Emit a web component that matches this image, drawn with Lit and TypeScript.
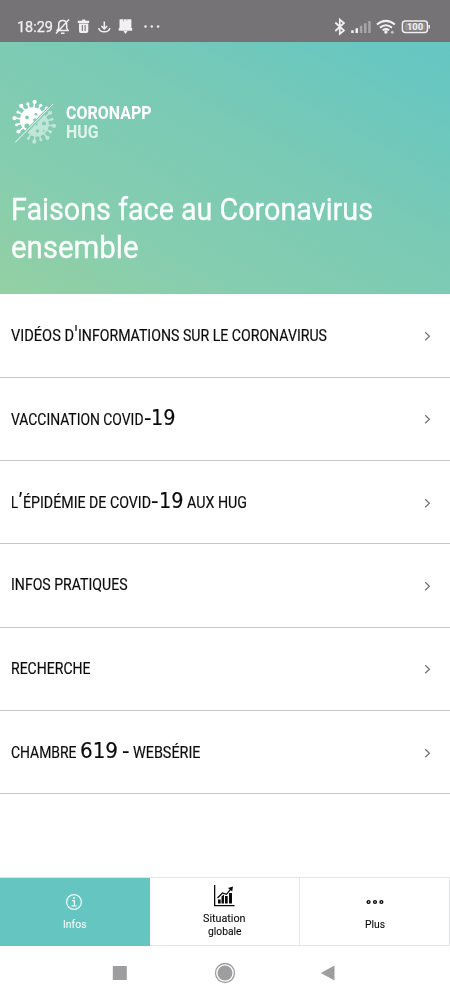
import { LitElement, html, svg, css } from "lit";
import { customElement, property } from "lit/decorators.js";
import { styleMap } from "lit/directives/style-map.js";

/** Text squeezed or stretched horizontally to a given width. */
@customElement("fit-text")
class FitText extends LitElement {
  @property() text = "";
  @property({ type: Number }) width = 0;

  static styles = css`
    :host { display: inline-block; white-space: pre; }
    .inner { display: inline-block; transform-origin: 0 50%; white-space: pre; }
  `;

  updated() {
    const el = this.renderRoot.querySelector(".inner") as HTMLElement;
    this.style.width = this.width + "px";
    el.style.transform = "none";
    const w = el.getBoundingClientRect().width;
    el.style.transform = `scaleX(${this.width / w})`;
    el.style.marginRight = `${this.width - w}px`;
  }

  render() {
    return html`<span class="inner">${this.text}</span>`;
  }
}

type Part = { t: string; w: number; gap?: number; big?: boolean };

const ROWS: Part[][] = [
  [{ t: "VIDÉOS D", w: 63 }, { t: "'", w: 4, big: true }, { t: "INFORMATIONS SUR LE CORONAVIRUS", w: 249 }],
  [{ t: "VACCINATION COVID", w: 132.5 }, { t: "-", w: 7.5, big: true }, { t: "19", w: 24.5, big: true }],
  [{ t: "L", w: 7 }, { t: "’", w: 5, big: true }, { t: "ÉPIDÉMIE DE COVID", w: 128 }, { t: "-", w: 7.5, big: true },
    { t: "19", w: 24.5, big: true }, { t: "AUX HUG", w: 60, gap: 4 }],
  [{ t: "INFOS PRATIQUES", w: 116.5 }],
  [{ t: "RECHERCHE", w: 79.5 }],
  [{ t: "CHAMBRE", w: 65.5 }, { t: "619", w: 38, big: true, gap: 3.5 }, { t: "-", w: 7.5, big: true, gap: 3.5 }, { t: "WEBSÉRIE", w: 67.5, gap: 4 }],
];

const spikes = (cx: number, cy: number, r: number) =>
  Array.from({ length: 16 }, (_, i) => {
    const a = ((i * 22.5 + 6) * Math.PI) / 180;
    const out = r + (i % 2 ? 4.3 : 5.8);
    const x = cx + Math.cos(a) * out;
    const y = cy + Math.sin(a) * out;
    return svg`<line x1=${cx + Math.cos(a) * r} y1=${cy + Math.sin(a) * r} x2=${x} y2=${y} stroke="currentColor" stroke-width="1.5"/>
      <circle cx=${x} cy=${y} r=${i % 2 ? 1.6 : 2.1} fill="currentColor"/>`;
  });

@customElement("app-root")
class AppRoot extends LitElement {
  static styles = css`
    :host { display: block; width: 450px; height: 1000px; overflow: hidden; background: #fff;
      font-family: Roboto, "Liberation Sans", sans-serif; color: #0b0b0c; }
    .page { display: flex; flex-direction: column; height: 1000px; }
    svg { display: block; flex: none; }
    .status { height: 42.3px; flex: none; box-sizing: border-box; background: #767377; color: #f2f0f3; display: flex;
      justify-content: space-between; padding: 17px 19px 0 16.5px; }
    .status-left { display: flex; height: 20px; align-items: center; }
    .status-icons { margin-left: -.4px; }
    .clock { font-size: 15px; line-height: 20px; -webkit-text-stroke: .25px; }
    .hero { height: 252.2px; flex: none; box-sizing: border-box; padding: 55.5px 11px 0;
      background: linear-gradient(29deg, #94d0a3 0%, #85cdb0 28%, #7acab5 58%, #69c7c0 88%, #66c6c2 100%); color: #fff; }
    .brand { display: flex; gap: 10px; height: 48px; }
    .brand-name { display: flex; flex-direction: column; padding-top: 5px; font-size: 18px; line-height: 19px; font-weight: 700; }
    .brand-sub { opacity: .75; }
    .title { margin: 45px 0 0; font-size: 31.5px; line-height: 38.5px; font-weight: 400; display: flex; flex-direction: column;
      color: #fbfffd; -webkit-text-stroke: .3px; }
    .list { flex: none; height: 500px; display: grid; grid-template-rows: repeat(6, 1fr); }
    .row { box-sizing: border-box; border-bottom: 1px solid #c6c7c8; display: flex; align-items: center; justify-content: space-between;
      padding: 0 18.5px .6px 11px; }
    .label { display: flex; align-items: baseline; font-size: 16px; line-height: 24px; -webkit-text-stroke: .18px; }
    .big { font-family: "DejaVu Sans Condensed", "DejaVu Sans", sans-serif; font-size: 21.5px; }
    .chevron { margin-top: 1px; }
    .spacer { flex: 1; }
    .tabs { height: 69px; flex: none; display: grid; grid-template-columns: 149.5px 150.5px 150px; box-sizing: border-box; }
    .tab { box-sizing: border-box; border: 1px solid #e3e4e5; border-left: 0; display: flex; flex-direction: column; align-items: center;
      font-size: 11px; line-height: 13.5px; -webkit-text-stroke: .1px; }
    .tab.active { background: #65c5c1; color: #effffd; border: 0; border-top: 1px solid #d8e8e8; padding-right: 1px; }
    .tab-icon { height: 32.5px; display: flex; align-items: center; padding-top: 7.5px; }
    .chart-icon { height: 29px; display: flex; align-items: flex-end; padding-bottom: 4.5px; }
    .tab-text { display: flex; flex-direction: column; align-items: center; }
    .system { height: 54px; flex: none; display: flex; box-sizing: border-box; padding: 15px 115px 0 112px;
      justify-content: space-between; }
    .home { margin-left: 2px; }
  `;

  renderStatus() {
    return html`<div class="status">
      <div class="status-left">
        <fit-text class="clock" text="18:29" width="36"></fit-text>
        <svg class="status-icons" width="112" height="20" viewBox="52 17 112 20" fill="none" stroke="currentColor" stroke-width="1.5">
          <path d="M58.500 30.500h9.500l-1.300-2.400v-3.500c0-2.800-1.500-4.200-4-4.200s-4 1.400-4 4.200v3.500l-1.500 2.400zM61 33.200h3.500M56 33.500l13-14"/>
          <g fill="currentColor" stroke="none"><path d="M77.800 20.800h4l.7-1.200h2.500l.7 1.200h3.400v2.200H77.800zM79 23.600h9.300v7.700q0 1.800-1.800 1.800h-5.700q-1.800 0-1.800-1.800z"/></g>
          <path stroke="#767377" stroke-width="1.100" d="M82.300 25v6M85.100 25v6"/>
          <path d="M104.300 21.500v7M101.400 26l2.900 2.900 2.900-2.900M98.800 28c.5 5 10.500 5 11 0"/>
          <path fill="currentColor" stroke="none" d="M119.500 20q0-.7.700-.7h10.500q.7 0 .7.700v8h.8v2.800h-13.500V28h.8zM123.400 31h4.200l-2.100 3z"/>
          <path stroke="#9f9ca0" stroke-width=".8" d="M123.500 19v2.500M126.800 19v1.800"/>
          <g fill="currentColor" stroke="none"><circle cx="145.500" cy="26.500" r="1.200"/><circle cx="151.800" cy="26.500" r="1.200"/><circle cx="158.100" cy="26.500" r="1.200"/></g>
        </svg>
      </div>
      <svg width="98" height="20" viewBox="333 17 98 20" fill="none" stroke="currentColor">
        <path stroke-width="1.700" d="M335.300 22.500l8.700 8-4.200 3.500V19.500l4.200 3.500-8.700 8"/>
        <g fill="currentColor" stroke="none">
          <rect x="351.200" y="30.300" width="2.500" height="2.700"/><rect x="355.500" y="28.200" width="2.500" height="4.800"/>
          <g opacity=".4"><rect x="359.800" y="25.800" width="2.500" height="7.200"/><rect x="364" y="23.300" width="2.500" height="9.700"/><rect x="368.200" y="21" width="2.500" height="12"/></g>
        </g>
        <path stroke-width="2" d="M376.900 24.600q9-7.400 18 0M379.900 27.600q6-4.800 12 0M382.700 30.300q3.200-2.400 6.400 0"/>
        <circle cx="385.900" cy="32" r="1.700" fill="currentColor" stroke="none"/>
        <circle cx="392.300" cy="32.300" r="1.500" fill="currentColor" stroke="none" opacity=".6"/>
        <rect x="402.400" y="21" width="25" height="11.400" rx="3" stroke-width="1.500"/>
        <rect x="404.500" y="23" width="20.800" height="7.400" rx="1" fill="#aaa7ab" stroke="none" opacity=".55"/>
        <path d="M429.200 25v3.600" stroke-width="1.400"/>
        <text x="407" y="30.200" font-size="9.500" font-weight="700" fill="currentColor" stroke="none" textLength="16" lengthAdjust="spacingAndGlyphs">100</text>
      </svg>
    </div>`;
  }

  renderVirus() {
    return html`<svg width="45" height="48" viewBox="11 98 45 48">
      <defs>
        <clipPath id="upper"><path d="M8 95H60L14 141.500L8 148z"/></clipPath>
        <clipPath id="lower"><path d="M58 101V148H12L17 143.500z"/></clipPath>
        <mask id="holes"><rect x="0" y="90" width="70" height="60" fill="#fff"/>
          <circle cx="27" cy="117.300" r="1.900"/><circle cx="36" cy="114.300" r="1.400"/><circle cx="27" cy="126" r="2.600"/><circle cx="34.800" cy="119.800" r="1.600"/>
          <circle cx="44" cy="123.500" r="2"/><circle cx="37.500" cy="131" r="1.700"/><circle cx="36.500" cy="124.500" r="1"/><circle cx="43.500" cy="130.800" r=".9"/></mask>
      </defs>
      <g clip-path="url(#upper)"><circle cx="32.700" cy="120" r="12.800" fill="currentColor" mask="url(#holes)"/>${spikes(32.7, 120, 12.5)}</g>
      <g clip-path="url(#lower)" opacity=".5"><circle cx="36.500" cy="124.300" r="12.300" fill="currentColor" mask="url(#holes)"/>${spikes(36.2, 124, 12)}</g>
      <path d="M15.300 142.300L53 104" stroke="currentColor" stroke-width=".9"/>
    </svg>`;
  }

  render() {
    return html`<div class="page">
      ${this.renderStatus()}
      <div class="hero">
        <div class="brand">
          ${this.renderVirus()}
          <div class="brand-name">
            <fit-text text="CORONAPP" width="85.5"></fit-text>
            <fit-text class="brand-sub" text="HUG" width="32.5"></fit-text>
          </div>
        </div>
        <h1 class="title">
          <fit-text text="Faisons face au Coronavirus" width="362"></fit-text>
          <fit-text text="ensemble" width="127.5"></fit-text>
        </h1>
      </div>
      <div class="list">
        ${ROWS.map((row) => html`<div class="row">
          <div class="label">${row.map((p) => html`<fit-text class=${p.big ? "big" : "small"} style=${styleMap({ marginLeft: `${p.gap ?? 0}px` })}
            .text=${p.t} .width=${p.w}></fit-text>`)}</div>
          <svg class="chevron" width="9" height="12" viewBox="0 0 9 12" fill="none" stroke="#707173" stroke-width="1.200"><path d="M2.200 2.200l4.200 4L2.200 10.200"/></svg>
        </div>`)}
      </div>
      <div class="spacer"></div>
      <div class="tabs">
        <div class="tab active">
          <div class="tab-icon"><svg width="18" height="18" viewBox="0 0 18 18" fill="none" stroke="currentColor" stroke-width="1.200">
            <circle cx="9" cy="9" r="7.400"/><path d="M7 7.600h2.400v5M6.500 12.900h5"/><circle cx="9" cy="5" r="1" fill="currentColor" stroke="none"/></svg></div>
          <div class="tab-text"><fit-text text="Infos" width="23.500"></fit-text></div>
        </div>
        <div class="tab">
          <div class="chart-icon"><svg width="22" height="22" viewBox="0 0 22 22" fill="currentColor">
            <path d="M1 0h1.300v20H21.500v1.300H1z"/><path d="M5 14.500h2.700v4H5zM8.500 11.500l2.500-2v9H8.500zM12 11h2.700v7.500H12zM16 8h3v10.500h-3z"/>
            <path d="M4.500 13l5-5 4 1.300 4-5" fill="none" stroke="currentColor" stroke-width="1.300"/><path d="M15 3l5-1.500-.8 5z"/></svg></div>
          <div class="tab-text"><fit-text text="Situation" width="42.500"></fit-text><fit-text text="globale" width="33.500"></fit-text></div>
        </div>
        <div class="tab">
          <div class="tab-icon"><svg width="18" height="6" viewBox="0 0 18 6" fill="none" stroke="currentColor" stroke-width="1.400">
            <circle cx="2.600" cy="3" r="1.400"/><circle cx="9" cy="3" r="1.400"/><circle cx="15.400" cy="3" r="1.400"/></svg></div>
          <div class="tab-text"><fit-text text="Plus" width="20"></fit-text></div>
        </div>
      </div>
      <div class="system">
        <svg width="15" height="24" viewBox="0 0 15 24" fill="#9e9d9f"><rect x=".8" y="5" width="14" height="14"/></svg>
        <svg class="home" width="22" height="24" viewBox="0 0 22 24" fill="#9e9d9f"><circle cx="11" cy="12" r="9.500" fill="none" stroke="#9e9d9f" stroke-width="1.300"/><circle cx="11" cy="12" r="7.500"/></svg>
        <svg width="15" height="24" viewBox="0 0 15 24" fill="#9e9d9f"><path d="M.8 12L14.500 4.500v15z"/></svg>
      </div>
    </div>`;
  }
}
